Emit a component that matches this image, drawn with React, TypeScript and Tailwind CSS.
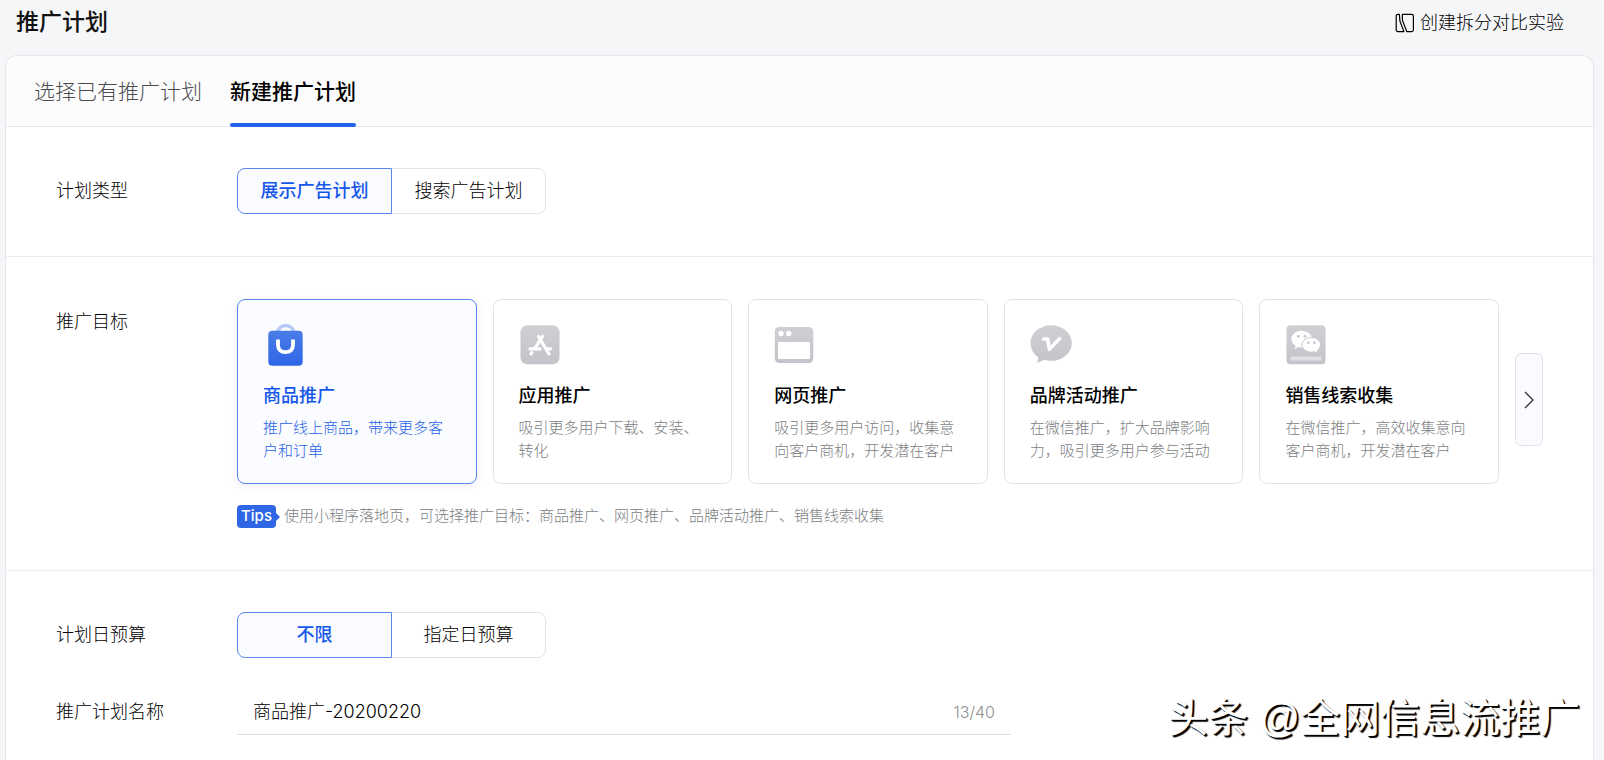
import { useState } from 'react';
import type { ReactNode } from 'react';
import clsx from 'clsx';

function SplitIcon() {
  return (
    <svg width="20" height="20" viewBox="0 0 20 20" fill="none" stroke="currentColor" strokeWidth="1.2" strokeLinejoin="round" aria-hidden="true">
      <path d="M1.200 3.200c0-1.200.6-1.800 1.800-1.800h1.400L4.900 8l4 10.600H3c-1.200 0-1.800-.6-1.800-1.800z" />
      <path d="M7.300 1.400h9.300c1.200 0 1.800.6 1.800 1.800v13.600c0 1.200-.6 1.800-1.800 1.800h-4.800L7.500 7.500z" />
    </svg>
  );
}

function BagIcon() {
  return (
    <svg width="44" height="44" viewBox="0 0 44 44" fill="none" aria-hidden="true">
      <defs>
        <linearGradient id="bag" x1="0" y1="0" x2="0" y2="1">
          <stop stopColor="#4a7ce8" />
          <stop offset="1" stopColor="#2f66e6" />
        </linearGradient>
      </defs>
      <path d="M14.500 10a8.200 7.500 0 0 1 16.400 0" stroke="#b4c9f6" strokeWidth="3.500" />
      <rect x="5.300" y="7.700" width="34.400" height="35" rx="4" fill="url(#bag)" />
      <path d="M15 16.500V22c0 4.600 3 7.200 7.500 7.200S30 26.600 30 22v-5.500" stroke="#fff" strokeWidth="3.800" />
    </svg>
  );
}

function GreyGradient({ id }: { id: string }) {
  return (
    <defs>
      <linearGradient id={id} x1="0" y1="0" x2="0" y2="1">
        <stop stopColor="#cfd0d4" />
        <stop offset="1" stopColor="#c3c4ca" />
      </linearGradient>
    </defs>
  );
}

function StoreIcon() {
  return (
    <svg width="44" height="44" viewBox="0 0 44 44" fill="none" aria-hidden="true">
      <GreyGradient id="store" />
      <rect x="1.500" y="2.300" width="39" height="39" rx="7" fill="url(#store)" />
      <g stroke="#fff" strokeWidth="3.200" strokeLinecap="round">
        <path d="M23.500 13.500 15.800 25.500M19.500 13.500l10.500 17.500" />
        <path d="M11 25.800h10M28 25.800h3.500" />
        <path d="m12.800 29.800-.8 1.200" />
      </g>
    </svg>
  );
}

function WebIcon() {
  return (
    <svg width="44" height="44" viewBox="0 0 44 44" fill="none" aria-hidden="true">
      <GreyGradient id="web" />
      <rect x=".8" y="4" width="38.500" height="36" rx="4.500" fill="url(#web)" />
      <circle cx="7" cy="10.500" r="2.700" fill="#fff" />
      <circle cx="14.700" cy="10.500" r="2.700" fill="#fff" />
      <rect x="4" y="19" width="32" height="17" rx="1" fill="#fff" />
    </svg>
  );
}

function BrandIcon() {
  return (
    <svg width="44" height="44" viewBox="0 0 44 44" fill="none" aria-hidden="true">
      <GreyGradient id="brand" />
      <path d="M21.200 2.300C32.600 2.300 41.800 10.200 41.800 20s-9.200 17.800-20.600 17.800c-2.600 0-4.800-.4-7-1.100L7.400 40l.9-5.800C3.600 31 .6 26 .6 20 .6 10.200 9.800 2.300 21.200 2.300z" fill="url(#brand)" />
      <path d="M13.500 16h4.200l1.600 10.300L29.500 15.800" stroke="#fff" strokeWidth="3.600" strokeLinecap="round" strokeLinejoin="round" />
    </svg>
  );
}

function LeadsIcon() {
  return (
    <svg width="44" height="44" viewBox="0 0 44 44" fill="none" aria-hidden="true">
      <GreyGradient id="leads" />
      <rect x="1.500" y="2.300" width="39" height="39" rx="4" fill="url(#leads)" />
      <path d="M16.700 7.800c5.700 0 10.300 3.700 10.300 8.300s-4.600 8.300-10.300 8.300c-1.200 0-2.300-.1-3.300-.4L9.800 26l.8-3.200c-2.600-1.500-4.200-3.900-4.200-6.700 0-4.600 4.600-8.300 10.300-8.300z" fill="#fff" />
      <path d="M26.300 14.500c5.200 0 9.300 3.300 9.300 7.300 0 2.400-1.400 4.500-3.500 5.800l.6 2.900-3.500-1.800c-.9.300-1.900.4-2.900.4-5.200 0-9.300-3.300-9.300-7.300s4.100-7.300 9.300-7.300z" fill="#fff" stroke="#c8c9ce" strokeWidth="1" />
      <g fill="#c4c5ca">
        <circle cx="13.300" cy="13.300" r="1.400" />
        <circle cx="20" cy="13.300" r="1.400" />
        <circle cx="23.300" cy="19.800" r="1.300" />
        <circle cx="29.300" cy="19.800" r="1.300" />
      </g>
      <rect x="5.500" y="33.500" width="31" height="4" rx="1" fill="#dfe0e4" />
    </svg>
  );
}

const GOALS = [
  { title: '商品推广', desc: '推广线上商品，带来更多客户和订单', icon: <BagIcon /> },
  { title: '应用推广', desc: '吸引更多用户下载、安装、转化', icon: <StoreIcon /> },
  { title: '网页推广', desc: '吸引更多用户访问，收集意向客户商机，开发潜在客户', icon: <WebIcon /> },
  { title: '品牌活动推广', desc: '在微信推广，扩大品牌影响力，吸引更多用户参与活动', icon: <BrandIcon /> },
  { title: '销售线索收集', desc: '在微信推广，高效收集意向客户商机，开发潜在客户', icon: <LeadsIcon /> },
];

const TABS = ['选择已有推广计划', '新建推广计划'];

function Row({ label, children }: { label: ReactNode; children: ReactNode }) {
  return (
    <div className="flex items-start">
      <div className="w-[181px] shrink-0 text-lg leading-[46px]">{label}</div>
      <div className="min-w-0 flex-1">{children}</div>
    </div>
  );
}

function Segmented({ label, options }: { label: string; options: string[] }) {
  const [active, setActive] = useState(options[0]);

  return (
    <div className="flex" role="group" aria-label={label}>
      {options.map((option) => (
        <button
          key={option}
          type="button"
          aria-pressed={option === active}
          onClick={() => setActive(option)}
          className={clsx(
            'h-[46px] w-[155px] border text-lg first:rounded-l-lg last:-ml-px last:rounded-r-lg',
            option === active ? 'relative border-[#5a86ee] bg-[#fafbff] font-medium text-[#1557ea]' : 'border-[#e2e3e9] bg-white',
          )}
        >
          {option}
        </button>
      ))}
    </div>
  );
}

export default function App() {
  const [tab, setTab] = useState(TABS[1]);
  const [goal, setGoal] = useState(GOALS[0].title);
  const [name, setName] = useState('商品推广-20200220');

  return (
    <div className="relative flex min-h-screen flex-col overflow-hidden bg-[#f5f6f8] font-['Inter','Noto_Sans_CJK_SC',sans-serif] font-light text-black">
      <header className="flex h-[55px] items-center justify-between pb-[10px] pl-4 pr-10">
        <h1 className="text-[23px] font-medium text-[#111]">推广计划</h1>
        <button type="button" className="flex items-center gap-[5px] text-lg">
          <SplitIcon />
          创建拆分对比实验
        </button>
      </header>

      <main className="ml-[5px] mr-[10px] flex-1 rounded-t-xl border border-b-0 border-[#e6e7ec] bg-white">
        <nav className="flex h-[71px] gap-7 rounded-t-xl border-b border-[#e6e7ec] bg-[#fcfcfd] pl-7">
          {TABS.map((item) => (
            <button
              key={item}
              type="button"
              onClick={() => setTab(item)}
              className={clsx(
                'relative h-[71px] text-[21px]',
                item === tab ? 'font-medium text-black' : 'text-[#4a4b4f]',
              )}
            >
              {item}
              {item === tab && <span className="absolute inset-x-0 bottom-0 h-1 rounded-sm bg-[#2162e8]" />}
            </button>
          ))}
        </nav>

        <section className="border-b border-[#ecedf1] px-[50px] pb-[42px] pt-[41px]">
          <Row label="计划类型">
            <Segmented label="计划类型" options={['展示广告计划', '搜索广告计划']} />
          </Row>
        </section>

        <section className="border-b border-[#ecedf1] px-[50px] py-[42px]">
          <Row label="推广目标">
            <div className="flex items-start gap-4">
              <div className="flex min-w-0 flex-1 gap-4">
                {GOALS.map((item) => {
                  const active = item.title === goal;
                  return (
                    <button
                      key={item.title}
                      type="button"
                      aria-pressed={active}
                      onClick={() => setGoal(item.title)}
                      className={clsx(
                        'flex min-w-0 flex-1 flex-col items-start rounded-lg border px-[25px] pb-[21px] pt-[23px] text-left',
                        active ? 'border-[#5a86ee] bg-[#fbfcff] shadow-[0_2px_8px_rgba(0,0,0,0.08)]' : 'border-[#e2e3e9] bg-white',
                      )}
                    >
                      {item.icon}
                      <span className={clsx('mt-4 text-lg font-medium leading-[26px]', active ? 'text-[#1557ea]' : 'text-black')}>{item.title}</span>
                      <span className={clsx('mt-[7px] text-[15px] leading-[23px]', active ? 'text-[#2560e6]' : 'text-[#7c7e82]')}>{item.desc}</span>
                    </button>
                  );
                })}
              </div>
              <button type="button" aria-label="更多推广目标" className="mt-[54px] flex h-[93px] w-7 shrink-0 items-center justify-center rounded-md border border-[#e2e3e9] bg-[#fafbfe]">
                <svg width="10" height="18" viewBox="0 0 10 18" fill="none" stroke="#333" strokeWidth="1.300" aria-hidden="true">
                  <path d="m1 1 8 8-8 8" />
                </svg>
              </button>
            </div>

            <div className="mt-[21px] flex h-[23px] items-center">
              <span className="flex h-[23px] w-[39px] items-center justify-center rounded bg-[#2f66e6] text-[15px] font-medium text-white">Tips</span>
              <svg width="4" height="8" viewBox="0 0 4 8" fill="#2f66e6" aria-hidden="true">
                <path d="M0 0l4 4-4 4z" />
              </svg>
              <p className="ml-1 text-[15px] text-[#7c7e82]">使用小程序落地页，可选择推广目标：商品推广、网页推广、品牌活动推广、销售线索收集</p>
            </div>
          </Row>
        </section>

        <section className="flex flex-col gap-[31px] px-[50px] pt-[41px]">
          <Row label="计划日预算">
            <Segmented label="计划日预算" options={['不限', '指定日预算']} />
          </Row>
          <Row label={<label htmlFor="plan-name">推广计划名称</label>}>
            <div className="flex h-[46px] max-w-[774px] items-center border-b border-[#dcdde3] px-4">
              <input
                id="plan-name"
                value={name}
                maxLength={40}
                onChange={(e) => setName(e.target.value)}
                className="min-w-0 flex-1 bg-transparent text-lg outline-none"
              />
              <span className="text-base text-[#8e8f93]">{name.length}/40</span>
            </div>
          </Row>
        </section>
      </main>

      <p className="pointer-events-none absolute bottom-[12px] right-6 whitespace-nowrap font-['Liberation_Sans','Noto_Sans_CJK_SC',sans-serif] text-[40px] font-normal leading-[60px] text-white [text-shadow:1px_1px_0_#000,2px_2px_1px_#000]">
        头条 @全网信息流推广
      </p>
    </div>
  );
}
